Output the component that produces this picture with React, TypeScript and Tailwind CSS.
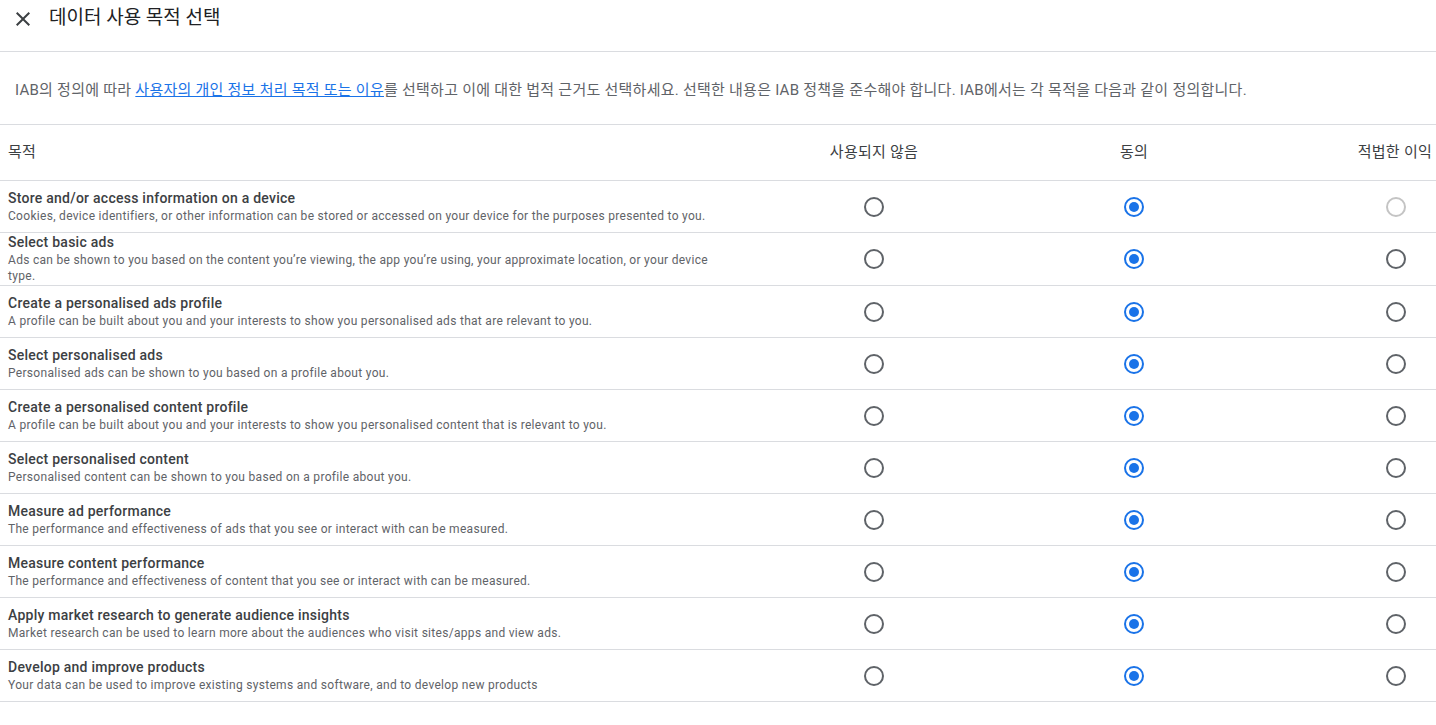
import React from "react";

type Row = { title: string; desc: string; disabledLegit?: boolean };

const rows: Row[] = [
  {
    title: "Store and/or access information on a device",
    desc: "Cookies, device identifiers, or other information can be stored or accessed on your device for the purposes presented to you.",
    disabledLegit: true,
  },
  {
    title: "Select basic ads",
    desc: "Ads can be shown to you based on the content you’re viewing, the app you’re using, your approximate location, or your device type.",
  },
  {
    title: "Create a personalised ads profile",
    desc: "A profile can be built about you and your interests to show you personalised ads that are relevant to you.",
  },
  {
    title: "Select personalised ads",
    desc: "Personalised ads can be shown to you based on a profile about you.",
  },
  {
    title: "Create a personalised content profile",
    desc: "A profile can be built about you and your interests to show you personalised content that is relevant to you.",
  },
  {
    title: "Select personalised content",
    desc: "Personalised content can be shown to you based on a profile about you.",
  },
  {
    title: "Measure ad performance",
    desc: "The performance and effectiveness of ads that you see or interact with can be measured.",
  },
  {
    title: "Measure content performance",
    desc: "The performance and effectiveness of content that you see or interact with can be measured.",
  },
  {
    title: "Apply market research to generate audience insights",
    desc: "Market research can be used to learn more about the audiences who visit sites/apps and view ads.",
  },
  {
    title: "Develop and improve products",
    desc: "Your data can be used to improve existing systems and software, and to develop new products",
  },
];

function Radio({ state }: { state: "off" | "on" | "disabled" }) {
  if (state === "on") {
    return (
      <span className="flex h-5 w-5 items-center justify-center rounded-full border-2 border-[#1a73e8]">
        <span className="h-[10px] w-[10px] rounded-full bg-[#1a73e8]" />
      </span>
    );
  }
  return (
    <span
      className={
        state === "disabled"
          ? "block h-5 w-5 rounded-full border-2 border-[#c4c4c4]"
          : "block h-5 w-5 rounded-full border-2 border-[#5f6368]"
      }
    />
  );
}

export default function App() {
  return (
    <div className="min-h-[725px] w-[1436px] bg-white font-[Roboto,'Noto_Sans_CJK_KR',sans-serif] text-[#3c4043]">
      <div className="h-[52px] border-b border-[#dadce0]">
        <div className="flex h-[36px] items-center">
          <svg
            viewBox="0 0 24 24"
            className="ml-[11px] mt-[2px] h-6 w-6 fill-[#3c4043]"
          >
            <path d="M19 6.41L17.59 5 12 10.59 6.41 5 5 6.41 10.59 12 5 17.59 6.41 19 12 13.41 17.59 19 19 17.59 13.41 12z" />
          </svg>
          <span className="ml-[14px] text-[19px] text-[#202124]">
            데이터 사용 목적 선택
          </span>
        </div>
      </div>

      <div className="border-b border-[#dadce0] pb-[24px] pl-[15px] pt-[28px] text-[15px] leading-5 tracking-[0.25px] text-[#5f6368]">
        IAB의 정의에 따라{" "}
        <a className="text-[#1a73e8] underline" href="#">
          사용자의 개인 정보 처리 목적 또는 이유
        </a>
        를 선택하고 이에 대한 법적 근거도 선택하세요. 선택한 내용은 IAB 정책을
        준수해야 합니다. IAB에서는 각 목적을 다음과 같이 정의합니다.
      </div>

      <div className="flex h-[56px] items-center border-b border-[#dadce0] text-[15px] tracking-[0.25px] text-[#3c4043]">
        <div className="w-[723px] pl-2">목적</div>
        <div className="w-[302px] text-center">사용되지 않음</div>
        <div className="w-[218px] text-center">동의</div>
        <div className="flex-1 pr-1 text-right">적법한 이익</div>
      </div>

      {rows.map((r) => (
        <div
          key={r.title}
          className="flex min-h-[52px] items-center border-b border-[#dadce0]"
        >
          <div className="-mt-px w-[723px] pb-px pl-2">
            <div className="text-[14px] font-medium leading-5 tracking-[0.25px] text-[#3c4043]">
              {r.title}
            </div>
            <div className="text-[12px] leading-4 tracking-[0.3px] text-[#5f6368]">
              {r.desc}
            </div>
          </div>
          <div className="flex w-[302px] justify-center">
            <Radio state="off" />
          </div>
          <div className="flex w-[218px] justify-center">
            <Radio state="on" />
          </div>
          <div className="flex flex-1 justify-end pr-[30px]">
            <Radio state={r.disabledLegit ? "disabled" : "off"} />
          </div>
        </div>
      ))}
    </div>
  );
}
